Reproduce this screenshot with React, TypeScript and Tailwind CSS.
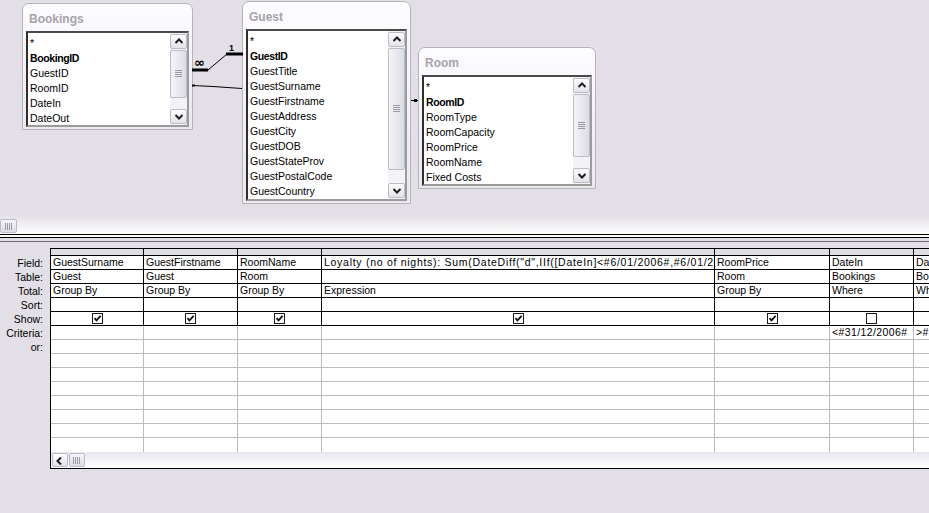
import React from "react";

// Query design view: table diagram on top, design grid below

type Field = { name: string; key?: boolean };

const FONT = "font-['Tahoma','Liberation_Sans',Arial,sans-serif]";

function Chevron({ dir }: { dir: "up" | "down" | "left" }) {
	const d =
		dir === "up"
			? "M1.5 6 L5 2.5 L8.5 6"
			: dir === "down"
				? "M1.5 3 L5 6.5 L8.5 3"
				: "M6 1.5 L2.5 5 L6 8.5";
	return (
		<svg width="10" height="9" viewBox="0 0 10 9" className="block">
			<path d={d} fill="none" stroke="#1f1f1f" strokeWidth="2" />
		</svg>
	);
}

function ScrollButton({ dir, className = "" }: { dir: "up" | "down" | "left"; className?: string }) {
	return (
		<div
			className={`flex items-center justify-center rounded-[2px] border border-[#b9bdc9] bg-gradient-to-b from-white to-[#e2e2e8] ${className}`}
		>
			<Chevron dir={dir} />
		</div>
	);
}

function Grip({ vertical = false }: { vertical?: boolean }) {
	if (vertical) {
		return (
			<svg width="8" height="7" viewBox="0 0 8 7" className="block">
				{[0, 2, 4, 6].map((x) => (
					<line key={x} x1={x + 0.5} y1="0" x2={x + 0.5} y2="7" stroke="#9a9aa2" />
				))}
			</svg>
		);
	}
	return (
		<svg width="7" height="8" viewBox="0 0 7 8" className="block">
			{[0, 2, 4, 6].map((y) => (
				<line key={y} x1="0" y1={y + 0.5} x2="7" y2={y + 0.5} stroke="#9a9aa2" />
			))}
		</svg>
	);
}

function VScrollbar({ thumb }: { thumb: string }) {
	return (
		<div className="flex w-[17px] shrink-0 flex-col gap-px bg-[#f3f2f6] py-px">
			<ScrollButton dir="up" className="h-[15px]" />
			<div
				className={`flex items-center justify-center rounded-[2px] border border-[#b9bdc9] bg-gradient-to-r from-[#f4f4f8] to-[#dcdce4] ${thumb}`}
			>
				<Grip />
			</div>
			<div className="flex-1" />
			<ScrollButton dir="down" className="h-[15px]" />
		</div>
	);
}

function TableBox({
	title,
	fields,
	className,
	thumb,
}: {
	title: string;
	fields: Field[];
	className: string;
	thumb: string;
}) {
	return (
		<div
			className={`absolute flex flex-col rounded-t-[7px] border border-[#b6b3bb] bg-gradient-to-b from-[#fdfcfe] to-[#ebe8ee] ${className}`}
		>
			<div className="h-[27px] shrink-0 pl-[6px] pt-[8px] text-[12px] font-bold leading-[14px] text-[#a6a4aa]">
				{title}
			</div>
			<div className="mx-[3px] mb-[2px] flex min-h-0 flex-1 border-2 border-b-[#9c9c9c] border-l-[#2e2e2e] border-r-[#9c9c9c] border-t-[#4a4a4a] bg-white">
				<div className="flex-1 overflow-hidden whitespace-nowrap pl-[2px] pt-[3px] text-[10.5px] leading-[15px] text-black">
					{fields.map((f) => (
						<div key={f.name} className={f.key ? "font-bold tracking-[-0.4px]" : ""}>
							{f.name}
						</div>
					))}
				</div>
				<VScrollbar thumb={thumb} />
			</div>
		</div>
	);
}

const bookings: Field[] = [
	{ name: "*" },
	{ name: "BookingID", key: true },
	{ name: "GuestID" },
	{ name: "RoomID" },
	{ name: "DateIn" },
	{ name: "DateOut" },
];

const guest: Field[] = [
	{ name: "*" },
	{ name: "GuestID", key: true },
	{ name: "GuestTitle" },
	{ name: "GuestSurname" },
	{ name: "GuestFirstname" },
	{ name: "GuestAddress" },
	{ name: "GuestCity" },
	{ name: "GuestDOB" },
	{ name: "GuestStateProv" },
	{ name: "GuestPostalCode" },
	{ name: "GuestCountry" },
];

const room: Field[] = [
	{ name: "*" },
	{ name: "RoomID", key: true },
	{ name: "RoomType" },
	{ name: "RoomCapacity" },
	{ name: "RoomPrice" },
	{ name: "RoomName" },
	{ name: "Fixed Costs" },
];

interface Column {
	w: string;
	field: string;
	table: string;
	total: string;
	show: boolean;
	criteria: string;
	wide?: boolean;
}

const COLUMNS: Column[] = [
	{ w: "w-[93px]", field: "GuestSurname", table: "Guest", total: "Group By", show: true, criteria: "" },
	{ w: "w-[94px]", field: "GuestFirstname", table: "Guest", total: "Group By", show: true, criteria: "" },
	{ w: "w-[84px]", field: "RoomName", table: "Room", total: "Group By", show: true, criteria: "" },
	{
		w: "w-[393px]",
		field: 'Loyalty (no of nights): Sum(DateDiff("d",IIf([DateIn]<#6/01/2006#,#6/01/20',
		table: "",
		total: "Expression",
		show: true,
		criteria: "",
		wide: true,
	},
	{ w: "w-[115px]", field: "RoomPrice", table: "Room", total: "Group By", show: true, criteria: "" },
	{ w: "w-[84px]", field: "DateIn", table: "Bookings", total: "Where", show: false, criteria: "<#31/12/2006#" },
	{ w: "w-[100px]", field: "DateOut", table: "Bookings", total: "Where", show: false, criteria: ">#1/01/2006#" },
];

const LABELS = ["Field:", "Table:", "Total:", "Sort:", "Show:", "Criteria:", "or:"];

function Checkbox({ checked }: { checked: boolean }) {
	return (
		<div className="flex h-[11px] w-[11px] items-center justify-center border border-[#1a1a1a] bg-white">
			{checked && (
				<svg width="9" height="9" viewBox="0 0 9 9" className="block">
					<path d="M1.5 4.2 L3.5 6.4 L7.6 1.8" fill="none" stroke="#111" strokeWidth="1.8" />
				</svg>
			)}
		</div>
	);
}

function GridRow({
	cells,
	dark,
	bottom,
}: {
	cells: (c: Column) => React.ReactNode;
	dark: boolean;
	bottom: boolean;
}) {
	const line = dark ? "border-black" : "border-[#bdbbc0]";
	return (
		<div className={`flex h-[14px] shrink-0 ${bottom ? `border-b ${line}` : ""}`}>
			{COLUMNS.map((c) => (
				<div
					key={c.w + c.field}
					className={`flex shrink-0 items-center overflow-hidden whitespace-nowrap border-r pl-[2px] ${line} ${c.w}`}
				>
					{cells(c)}
				</div>
			))}
		</div>
	);
}

export default function App() {
	return (
		<div className={`flex h-[513px] w-[929px] flex-col overflow-hidden bg-[#e3dfe6] ${FONT}`}>
			{/* Table diagram */}
			<div className="relative h-[215px] shrink-0">
				<TableBox
					title="Bookings"
					fields={bookings}
					className="left-[22px] top-[3px] h-[127px] w-[171px]"
					thumb="h-[48px]"
				/>
				<TableBox
					title="Guest"
					fields={guest}
					className="left-[242px] top-[1px] h-[203px] w-[169px]"
					thumb="h-[122px]"
				/>
				<TableBox
					title="Room"
					fields={room}
					className="left-[418px] top-[47px] h-[142px] w-[178px]"
					thumb="h-[63px]"
				/>
				<svg width="929" height="215" className="pointer-events-none absolute left-0 top-0">
					<line x1="192" y1="70" x2="208" y2="70" stroke="#000" strokeWidth="3" />
					<line x1="208" y1="70" x2="227" y2="54" stroke="#000" strokeWidth="1" />
					<line x1="226" y1="54" x2="243" y2="54" stroke="#000" strokeWidth="3" />
					<text x="194" y="67" fontSize="13" fontWeight="bold" fontFamily="DejaVu Sans">
						∞
					</text>
					<text x="229" y="51" fontSize="9" fontWeight="bold" fontFamily="Liberation Sans">
						1
					</text>
					<rect x="192" y="84.5" width="3" height="2" fill="#000" />
					<polyline points="193,85.5 213,86.5 242,88.5" fill="none" stroke="#000" strokeWidth="1" />
					<line x1="411" y1="100.5" x2="418" y2="100.5" stroke="#000" strokeWidth="1" />
					<rect x="414" y="99" width="3" height="3" fill="#000" />
				</svg>
			</div>

			{/* Splitter scrollbar */}
			<div className="flex h-[19px] shrink-0 items-end bg-gradient-to-b from-[#e3dfe6] to-white pb-px">
				<div className="flex h-[14px] w-[17px] items-center justify-center rounded-[2px] border border-[#b9bdc9] bg-gradient-to-b from-[#f6f6f9] to-[#dcdce3]">
					<Grip vertical />
				</div>
			</div>
			<div className="h-px shrink-0 bg-black" />
			<div className="h-[2px] shrink-0 bg-white" />
			<div className="h-px shrink-0 bg-black" />
			<div className="h-[3px] shrink-0" />
			<div className="h-px shrink-0 bg-[#6f6d72]" />
			<div className="h-[6px] shrink-0" />

			{/* Design grid */}
			<div className="flex shrink-0 text-[10.5px] leading-[13px] text-black">
				<div className="w-[50px] shrink-0 pr-[7px] text-right">
					<div className="h-[8px]" />
					{LABELS.map((l) => (
						<div key={l} className="flex h-[14px] items-center justify-end">
							{l}
						</div>
					))}
				</div>
				<div className="flex w-[879px] shrink-0 flex-col overflow-hidden border-b border-l border-t border-black bg-white">
					<div className="flex h-[7px] shrink-0 border-b border-black">
						{COLUMNS.map((c) => (
							<div key={c.w + c.field} className={`shrink-0 border-r border-black bg-[#dfdce3] ${c.w}`} />
						))}
					</div>
					<GridRow
						dark
						bottom
						cells={(c) => <span className={c.wide ? "tracking-[0.72px]" : ""}>{c.field}</span>}
					/>
					<GridRow dark bottom cells={(c) => c.table} />
					<GridRow dark bottom cells={(c) => c.total} />
					<GridRow dark bottom cells={() => null} />
					<GridRow
						dark
						bottom
						cells={(c) => (
							<div className="flex flex-1 justify-center pr-[2px]">
								<Checkbox checked={c.show} />
							</div>
						)}
					/>
					<GridRow
						dark={false}
						bottom
						cells={(c) => <span className="tracking-[0.4px]">{c.criteria}</span>}
					/>
					{[0, 1, 2, 3, 4, 5, 6, 7].map((i) => (
						<GridRow key={i} dark={false} bottom={i < 7} cells={() => null} />
					))}
					<div className="flex h-[16px] shrink-0 items-start gap-px bg-gradient-to-b from-[#e8e5ec] to-white pl-px pt-px">
						<ScrollButton dir="left" className="h-[14px] w-[16px]" />
						<div className="flex h-[14px] w-[16px] items-center justify-center rounded-[2px] border border-[#b9bdc9] bg-gradient-to-b from-[#f6f6f9] to-[#dcdce3]">
							<Grip vertical />
						</div>
					</div>
				</div>
			</div>
		</div>
	);
}
